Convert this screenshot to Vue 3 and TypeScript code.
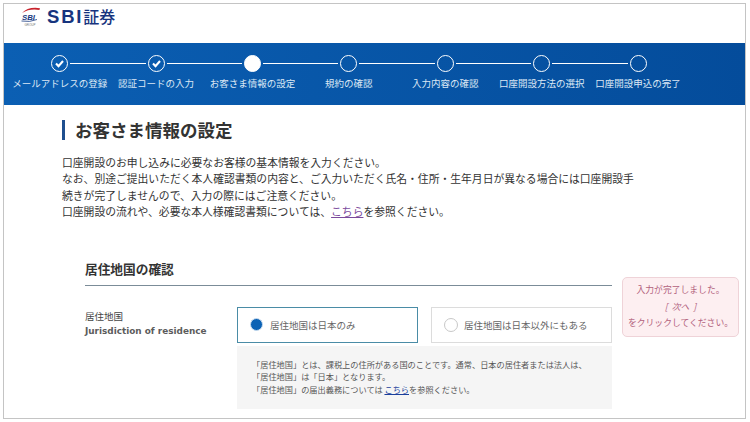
<script setup lang="ts">
interface Step { label: string; state: 'done' | 'current' | 'todo' }
const steps: Step[] = [
  { label: 'メールアドレスの登録', state: 'done' },
  { label: '認証コードの入力', state: 'done' },
  { label: 'お客さま情報の設定', state: 'current' },
  { label: '規約の確認', state: 'todo' },
  { label: '入力内容の確認', state: 'todo' },
  { label: '口座開設方法の選択', state: 'todo' },
  { label: '口座開設申込の完了', state: 'todo' },
]
</script>

<template>
  <div class="frame">
    <header class="top">
      <svg class="logo" width="20" height="21" viewBox="0 0 20 21">
        <path d="M1 7 Q7 0.5 19 2.2 L18.4 4 Q9 2.2 1 7 Z" fill="#c8232c" />
        <text x="1" y="13.5" class="logo-sbi">SBI</text>
        <path d="M0.5 15 Q9 16.5 16 13.5" fill="none" stroke="#16377f" stroke-width="0.8" />
        <text x="3.5" y="20" class="logo-group">GROUP</text>
      </svg>
      <span class="brand"><span class="brand-latin">SBI</span>証券</span>
    </header>

    <nav class="band">
      <div v-for="(s, i) in steps" :key="s.label" class="step">
        <div class="track">
          <span class="line" :class="{ hidden: i === 0 }"></span>
          <span class="dot" :class="s.state">
            <svg v-if="s.state === 'done'" width="11" height="11" viewBox="0 0 11 11">
              <path d="M2 5.6 L4.5 8.1 L9 3" fill="none" stroke="#fff" stroke-width="2.1" />
            </svg>
          </span>
          <span class="line" :class="{ hidden: i === steps.length - 1 }"></span>
        </div>
        <span class="step-label">{{ s.label }}</span>
      </div>
    </nav>

    <main class="content">
      <h1 class="title">お客さま情報の設定</h1>
      <p class="intro">
        口座開設のお申し込みに必要なお客様の基本情報を入力ください。<br />
        なお、別途ご提出いただく本人確認書類の内容と、ご入力いただく氏名・住所・生年月日が異なる場合には口座開設手<br />
        続きが完了しませんので、入力の際にはご注意ください。<br />
        口座開設の流れや、必要な本人様確認書類については、<a class="link-visited">こちら</a>を参照ください。
      </p>

      <section class="section">
        <h2 class="section-title">居住地国の確認</h2>
        <div class="form-row">
          <div class="label">
            <div class="label-ja">居住地国</div>
            <div class="label-en">Jurisdiction of residence</div>
          </div>
          <div class="fields">
            <div class="options">
              <div class="option selected">
                <span class="radio on"></span>
                <span>居住地国は日本のみ</span>
              </div>
              <div class="option">
                <span class="radio"></span>
                <span>居住地国は日本以外にもある</span>
              </div>
            </div>
            <div class="note">
              「居住地国」とは、課税上の住所がある国のことです。通常、日本の居住者または法人は、<br />
              「居住地国」は「日本」となります。<br />
              「居住地国」の届出義務については <a class="link">こちら</a>を参照ください。
            </div>
          </div>
        </div>
      </section>

      <aside class="tip">
        入力が完了しました。<br />
        <i class="next">[&nbsp;&nbsp;次へ&nbsp;&nbsp;]</i><br />
        をクリックしてください。
      </aside>
    </main>
  </div>
</template>

<style>
html, body { margin: 0; background: #fff; overflow: hidden; }
</style>

<style scoped>
.frame {
  box-sizing: border-box;
  width: 743px;
  height: 416px;
  margin: 3px 0 0 3px;
  border: 1px solid #c4c4c4;
  font-family: "Noto Sans CJK JP", "Noto Sans", sans-serif;
  color: #333;
  overflow: hidden;
}
.top {
  height: 39px;
  display: flex;
  align-items: flex-start;
  padding: 2px 0 0 17px;
  box-sizing: border-box;
  gap: 6px;
}
.logo-sbi { font: italic 900 7.8px "Liberation Sans", sans-serif; fill: #16377f; }
.logo-group { font: 3px "Liberation Sans", sans-serif; fill: #777; }
.brand {
  display: flex;
  align-items: baseline;
  margin-top: -1px;
  font-size: 16px;
  line-height: 22px;
  font-weight: 500;
  color: #17347e;
}
.brand-latin {
  font-family: "Liberation Sans", sans-serif;
  font-size: 18.5px;
  font-weight: 700;
  letter-spacing: 1.8px;
}
.band {
  height: 62px;
  box-sizing: border-box;
  padding: 12px 0 0 7.5px;
  display: flex;
  background: linear-gradient(90deg, #0b5fb3, #044c9b);
}
.step {
  width: 96.4px;
  display: flex;
  flex-direction: column;
  align-items: center;
}
.track {
  width: 100%;
  display: flex;
  align-items: center;
}
.line { flex: 1; height: 1px; background: #fff; }
.line.hidden { visibility: hidden; }
.dot {
  box-sizing: border-box;
  width: 17px;
  height: 17px;
  margin: 0 2px;
  border-radius: 50%;
  border: 1.7px solid #fff;
  display: flex;
  align-items: center;
  justify-content: center;
  flex: none;
}
.dot.current { background: #fff; }
.step-label {
  margin-top: 4px;
  font-size: 9.5px;
  line-height: 14px;
  color: #dce8f5;
  white-space: nowrap;
}
.content {
  position: relative;
  padding: 15px 0 0 58px;
}
.title {
  margin: 0;
  height: 20px;
  border-left: 3px solid #1f4f8f;
  padding-left: 10px;
  font-size: 17.5px;
  line-height: 20px;
  font-weight: 700;
  color: #333;
  white-space: nowrap;
}
.intro {
  margin: 14px 0 0;
  font-size: 10.8px;
  line-height: 16.4px;
  color: #333;
  white-space: nowrap;
}
.link-visited { color: #7b4a9c; text-decoration: underline; }
.link { color: #1a3f9c; text-decoration: underline; }
.section {
  margin: 40px 0 0 23px;
  width: 527px;
}
.section-title {
  margin: 0;
  height: 25px;
  font-size: 12.7px;
  line-height: 18px;
  font-weight: 700;
  color: #333;
  border-bottom: 1px solid #7b8c98;
  box-sizing: content-box;
}
.form-row {
  display: flex;
  margin-top: 21px;
}
.label {
  width: 152px;
  flex: none;
  padding-top: 2px;
}
.label-ja { font-size: 9.5px; line-height: 15px; color: #444; }
.label-en {
  font-family: "DejaVu Sans", sans-serif;
  font-size: 8.9px;
  font-weight: 700;
  line-height: 15px;
  color: #5c5c5c;
  white-space: nowrap;
}
.fields { width: 375px; flex: none; }
.options { display: flex; justify-content: space-between; }
.option {
  box-sizing: border-box;
  width: 181px;
  height: 36px;
  border: 1px solid #dcdcdc;
  display: flex;
  align-items: center;
  gap: 6px;
  padding-left: 11px;
  font-size: 9.5px;
  color: #666;
  white-space: nowrap;
}
.option.selected { border-color: #4a8ca6; gap: 7px; padding-left: 12px; }
.radio {
  box-sizing: border-box;
  width: 14px;
  height: 14px;
  border-radius: 50%;
  border: 1px solid #c8c8c8;
  background: #fff;
  flex: none;
  margin-left: 1px;
}
.radio.on {
  background: #0b62b5;
  border: 1.5px solid #c9dcef;
  width: 13px;
  height: 13px;
  margin-left: 0;
}
.note {
  margin-top: 3px;
  height: 63px;
  box-sizing: border-box;
  padding: 12px 0 0 15px;
  background: #f5f5f5;
  font-size: 8.2px;
  line-height: 12.6px;
  color: #555;
  white-space: nowrap;
}
.tip {
  position: absolute;
  left: 618px;
  top: 172px;
  box-sizing: border-box;
  width: 117px;
  height: 60px;
  padding-top: 4px;
  background: #fdeff1;
  border: 1px solid #efd3d8;
  border-radius: 5px;
  text-align: center;
  font-size: 8.8px;
  line-height: 16.5px;
  color: #b2617c;
  white-space: nowrap;
}
.next { font-style: italic; }
</style>
